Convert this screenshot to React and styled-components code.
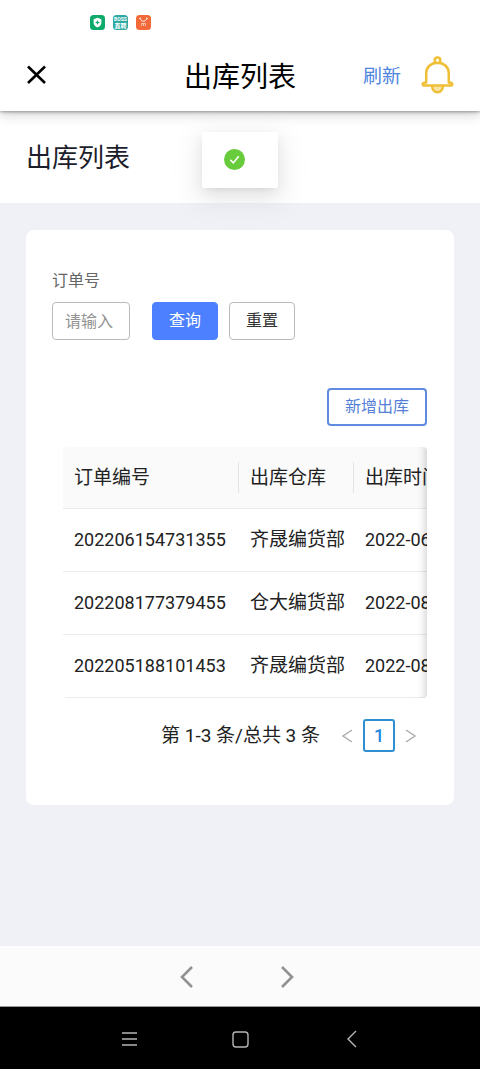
import React from "react";
import styled, { createGlobalStyle } from "styled-components";

const GlobalStyle = createGlobalStyle`
  * { box-sizing: border-box; }
  body {
    margin: 0;
    background: #eff1f6;
    color: #222;
    font-family: Roboto, "Noto Sans CJK SC", sans-serif;
  }
  button, input { font-family: inherit; margin: 0; }
  h1, h2 { margin: 0; font-weight: 400; }
`;

const Page = styled.div`
  min-height: 100vh;
  display: flex;
  flex-direction: column;
`;

const StatusBar = styled.div`
  position: relative;
  z-index: 2;
  height: 38px;
  padding: 15px 90px 0;
  display: flex;
  gap: 8px;
  background: #fff;
`;

const AppHeader = styled.header`
  position: relative;
  z-index: 1;
  height: 73px;
  padding: 0 26px;
  display: grid;
  grid-template-columns: 1fr auto 1fr;
  align-items: center;
  background: #fff;
  box-shadow: 0 1px 3px rgba(0, 0, 0, 0.35), 0 3px 12px rgba(0, 0, 0, 0.2);
`;

const HeaderTitle = styled.h1`
  padding-top: 6px;
  font-size: 28px;
  line-height: 40px;
  color: #000;
`;

const HeaderActions = styled.div`
  display: flex;
  justify-content: flex-end;
  align-items: center;
  gap: 20px;
`;

const PlainButton = styled.button`
  display: flex;
  padding: 0;
  border: 0;
  background: none;
  color: ${(p) => p.$color || "#000"};
  font-size: 19px;
  line-height: 28px;
  justify-self: start;
`;

const RefreshButton = styled(PlainButton)`
  padding-top: 4px;
  color: #4f86e0;
`;

const TitleBar = styled.div`
  height: 92px;
  padding: 27px 26px 0;
  background: #fff;
`;

const PageTitle = styled.h2`
  font-size: 26px;
  line-height: 40px;
  color: #1c1e2b;
`;

const Toast = styled.div`
  position: absolute;
  z-index: 2;
  top: 132px;
  left: 50%;
  transform: translateX(-50%);
  width: 76px;
  height: 56px;
  padding: 17px 22px;
  background: #fff;
  border-radius: 2px;
  box-shadow: 0 3px 6px -4px rgba(0, 0, 0, 0.12), 0 6px 16px rgba(0, 0, 0, 0.08),
    0 9px 28px 8px rgba(0, 0, 0, 0.05);
`;

const Content = styled.main`
  flex: 1;
  padding: 27px 26px;
`;

const Card = styled.section`
  padding: 36px 27px 53px 26px;
  border-radius: 8px;
  background: #fff;
`;

const SearchForm = styled.form`
  display: flex;
  align-items: flex-end;
  gap: 11px;
`;

const Field = styled.div`
  display: flex;
  flex-direction: column;
  gap: 7px;
  width: 78px;
  margin-right: 11px;
  padding-top: 1px;
`;

const FieldLabel = styled.label`
  font-size: 16px;
  line-height: 28px;
  color: #666;
`;

const TextInput = styled.input`
  width: 100%;
  height: 38px;
  padding: 0 12px;
  border: 1px solid #bbb;
  border-radius: 4px;
  font-size: 16px;
  color: #333;
  &::placeholder { color: #929292; }
`;

const buttonKinds = {
  primary: { border: "1px solid #4d80ff", background: "#4d80ff", color: "#fff" },
  outline: { border: "2px solid #5f8ce0", background: "#fff", color: "#557fd6" },
  plain: { border: "1px solid #bbb", background: "#fff", color: "#333" },
};

const Button = styled.button`
  height: 38px;
  padding: 0 16px;
  border: ${(p) => buttonKinds[p.$kind].border};
  border-radius: 4px;
  background: ${(p) => buttonKinds[p.$kind].background};
  color: ${(p) => buttonKinds[p.$kind].color};
  font-size: 16px;
  line-height: 24px;
`;

const Toolbar = styled.div`
  display: flex;
  justify-content: flex-end;
  margin: 48px 0 21px;
`;

const TableFrame = styled.div`
  position: relative;
  margin-left: 11px;
  border-radius: 4px;
  overflow: hidden;
  &::after {
    content: "";
    position: absolute;
    top: 0;
    right: 0;
    bottom: 0;
    width: 16px;
    box-shadow: inset -10px 0 8px -8px rgba(0, 0, 0, 0.18);
    pointer-events: none;
  }
`;

const TableScroll = styled.div`
  overflow-x: auto;
  scrollbar-width: none;
`;

const Table = styled.table`
  width: 520px;
  table-layout: fixed;
  border-collapse: separate;
  border-spacing: 0;
  font-size: 19px;
  line-height: 28px;
  text-align: left;
  white-space: nowrap;
`;

const Column = styled.col`
  width: ${(p) => p.$width}px;
`;

const HeadCell = styled.th`
  position: relative;
  height: 62px;
  padding: 0 11px;
  border-bottom: 1px solid #ebebeb;
  background: #fafafa;
  font-weight: 400;
  &:not(:last-child)::after {
    content: "";
    position: absolute;
    top: 15px;
    right: 0;
    width: 1px;
    height: 31px;
    background: #e4e4e4;
  }
`;

const Cell = styled.td`
  height: 63px;
  padding: 0 11px;
  border-bottom: 1px solid #ebebeb;
  font-size: ${(p) => (p.$numeric ? 18 : 19)}px;
`;

const Pagination = styled.nav`
  display: flex;
  justify-content: flex-end;
  align-items: center;
  margin-top: 21px;
  font-size: 19px;
  line-height: 28px;
`;

const Total = styled.span`
  margin-right: 11px;
  white-space: nowrap;
`;

const PageButton = styled.button`
  display: flex;
  align-items: center;
  justify-content: center;
  width: 32px;
  height: 33px;
  padding: 0;
  border: ${(p) => (p.$current ? "2px solid #2f8fd0" : "0")};
  border-radius: 3px;
  background: #fff;
  color: ${(p) => (p.$current ? "#1e88e0" : "#aaa")};
  font-size: 18px;
  font-weight: 500;
`;

const BrowserBar = styled.nav`
  display: flex;
  justify-content: center;
  align-items: center;
  gap: 76px;
  height: 60px;
  padding-right: 7px;
  border-top: 1px solid #fefefe;
  background: #fbfbfb;
`;

const SystemBar = styled.nav`
  display: flex;
  justify-content: center;
  align-items: center;
  gap: 95px;
  height: 63px;
  padding: 2px 0 0 2px;
  border-top: 1px solid #999;
  background: #000;
`;

const rows = [
  ["202206154731355", "齐晟编货部", "2022-06-15"],
  ["202208177379455", "仓大编货部", "2022-08-17"],
  ["202205188101453", "齐晟编货部", "2022-08-18"],
];

const Chevron = ({ size, stroke, right, points }) => (
  <svg width={size} height="24" viewBox={`0 0 ${size} 24`} aria-hidden="true">
    <polyline
      points={points}
      transform={right ? `matrix(-1 0 0 1 ${size} 0)` : undefined}
      fill="none"
      stroke="currentColor"
      strokeWidth={stroke}
    />
  </svg>
);

const ShieldIcon = () => (
  <svg width="15" height="15" viewBox="0 0 15 15" aria-hidden="true">
    <rect width="15" height="15" rx="3.5" fill="#0cab6b" />
    <path d="M7.5 2.8 11.4 4.2V7.4C11.4 10 9.5 11.6 7.5 12.4 5.5 11.6 3.6 10 3.6 7.4V4.2Z" fill="#fff" />
    <path d="M7.5 5 8.2 6.8 10 7.5 8.2 8.2 7.5 10 6.8 8.2 5 7.5 6.8 6.8Z" fill="#0cab6b" />
  </svg>
);

const BossIcon = () => (
  <svg width="15" height="15" viewBox="0 0 15 15" aria-hidden="true">
    <rect width="15" height="15" rx="3.5" fill="#2fa9a4" />
    <g fill="#fff" textAnchor="middle" fontWeight="700">
      <text x="7.5" y="6.2" fontSize="5">BOSS</text>
      <text x="7.5" y="12.6" fontSize="6">直聘</text>
    </g>
  </svg>
);

const ShopIcon = () => (
  <svg width="15" height="15" viewBox="0 0 15 15" aria-hidden="true">
    <rect width="15" height="15" rx="3.5" fill="#f4693a" />
    <path d="M4 3.2C4.7 5.3 6 6.2 7.5 6.2S10.3 5.3 11 3.2M3.3 3.7 4.7 2.9M10.3 2.9 11.7 3.7" fill="none" stroke="#fff" strokeWidth="1" />
    <path d="M5.5 8.5H9.5M5.7 8.5V11M7.5 8.5V11M9.3 8.5V11" fill="none" stroke="#fdd9c8" strokeWidth=".8" />
  </svg>
);

const CloseIcon = () => (
  <svg width="20" height="20" viewBox="0 0 20 20" aria-hidden="true">
    <path d="M2 1.5 19 18M19 1.5 2 18" stroke="currentColor" strokeWidth="2.6" />
  </svg>
);

const BellIcon = () => (
  <svg width="33" height="38" viewBox="0 0 33 38" fill="none" stroke="#efbf38" strokeWidth="2.5" aria-hidden="true">
    <path d="M11 29.5C11.3 34 13.5 36.3 16.5 36.3S21.7 34 22 29.5" fill="#f9e3a6" />
    <path d="M5.2 26.5V17.5C5.2 11.2 9.8 6.7 16.5 6.7S27.8 11.2 27.8 17.5V26.5C29.8 26.5 31.3 27 31.3 28.2S30.5 29.6 29 29.6H4C2.5 29.6 1.7 29.4 1.7 28.2S3.2 26.5 5.2 26.5Z" fill="#fff" strokeLinejoin="round" />
    <circle cx="16.5" cy="4.2" r="2.8" fill="#fff" />
  </svg>
);

const SuccessIcon = () => (
  <svg width="21" height="21" viewBox="0 0 21 21" role="img" aria-label="成功">
    <circle cx="10.5" cy="10.5" r="10.5" fill="#67cb3b" />
    <path d="M6.3 10.8 9.3 13.9 14.7 7.3" fill="none" stroke="#fff" strokeWidth="1.6" />
  </svg>
);

const MenuIcon = () => (
  <svg width="15" height="16" viewBox="0 0 15 16" aria-hidden="true">
    <path d="M0 2H15M0 8H15M0 14H15" stroke="currentColor" strokeWidth="1.5" />
  </svg>
);

const HomeIcon = () => (
  <svg width="17" height="17" viewBox="0 0 17 17" aria-hidden="true">
    <rect x="1" y="1" width="15" height="15" rx="3" fill="none" stroke="currentColor" strokeWidth="1.4" />
  </svg>
);

export default function App() {
  return (
    <Page>
      <GlobalStyle />
      <StatusBar>
        <ShieldIcon />
        <BossIcon />
        <ShopIcon />
      </StatusBar>
      <AppHeader>
        <PlainButton aria-label="关闭"><CloseIcon /></PlainButton>
        <HeaderTitle>出库列表</HeaderTitle>
        <HeaderActions>
          <RefreshButton>刷新</RefreshButton>
          <PlainButton aria-label="通知"><BellIcon /></PlainButton>
        </HeaderActions>
      </AppHeader>
      <Toast role="status"><SuccessIcon /></Toast>
      <TitleBar>
        <PageTitle>出库列表</PageTitle>
      </TitleBar>
      <Content>
        <Card>
          <SearchForm onSubmit={(e) => e.preventDefault()}>
            <Field>
              <FieldLabel htmlFor="order">订单号</FieldLabel>
              <TextInput id="order" placeholder="请输入" />
            </Field>
            <Button type="submit" $kind="primary">查询</Button>
            <Button type="reset" $kind="plain">重置</Button>
          </SearchForm>
          <Toolbar>
            <Button type="button" $kind="outline">新增出库</Button>
          </Toolbar>
          <TableFrame>
            <TableScroll>
              <Table>
                <colgroup>
                  <Column $width={176} />
                  <Column $width={115} />
                  <Column $width={229} />
                </colgroup>
                <thead>
                  <tr>
                    <HeadCell scope="col">订单编号</HeadCell>
                    <HeadCell scope="col">出库仓库</HeadCell>
                    <HeadCell scope="col">出库时间</HeadCell>
                  </tr>
                </thead>
                <tbody>
                  {rows.map(([order, warehouse, date]) => (
                    <tr key={order}>
                      <Cell $numeric>{order}</Cell>
                      <Cell>{warehouse}</Cell>
                      <Cell $numeric>{date}</Cell>
                    </tr>
                  ))}
                </tbody>
              </Table>
            </TableScroll>
          </TableFrame>
          <Pagination aria-label="分页">
            <Total>第 1-3 条/总共 3 条</Total>
            <PageButton aria-label="上一页"><Chevron size={12} stroke={1.4} points="11,6 2,12 11,18" /></PageButton>
            <PageButton $current aria-current="page">1</PageButton>
            <PageButton aria-label="下一页"><Chevron size={12} stroke={1.4} right points="11,6 2,12 11,18" /></PageButton>
          </Pagination>
        </Card>
      </Content>
      <BrowserBar aria-label="浏览器">
        <PlainButton $color="#929292" aria-label="后退"><Chevron size={24} stroke={2.6} points="17,2 7,12 17,22" /></PlainButton>
        <PlainButton $color="#929292" aria-label="前进"><Chevron size={24} stroke={2.6} right points="17,2 7,12 17,22" /></PlainButton>
      </BrowserBar>
      <SystemBar aria-label="系统">
        <PlainButton $color="#b5b5b5" aria-label="菜单"><MenuIcon /></PlainButton>
        <PlainButton $color="#b5b5b5" aria-label="主页"><HomeIcon /></PlainButton>
        <PlainButton $color="#b5b5b5" aria-label="返回"><Chevron size={16} stroke={1.4} points="12,4 4,12 12,20" /></PlainButton>
      </SystemBar>
    </Page>
  );
}
